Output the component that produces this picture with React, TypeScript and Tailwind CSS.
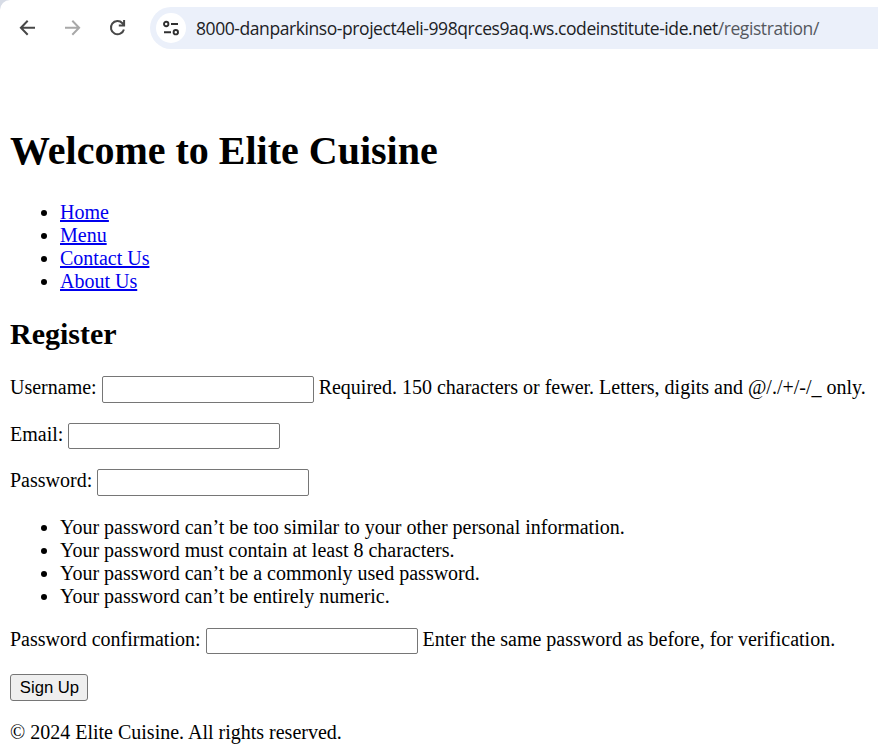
import React from "react";

const links = ["Home", "Menu", "Contact Us", "About Us"];
const rules = [
  "Your password can’t be too similar to your other personal information.",
  "Your password must contain at least 8 characters.",
  "Your password can’t be a commonly used password.",
  "Your password can’t be entirely numeric.",
];

function Toolbar() {
  return (
    <div className="bg-[#d7dce6]">
      <header className="flex h-14 items-center rounded-tl-[10px] bg-white pl-[18px]">
        <svg className="h-5 w-5 shrink-0" viewBox="0 0 20 20" fill="none" stroke="#474747" strokeWidth="2">
          <path d="M17 9.7H3.5M9.7 2.7L2.9 9.7L9.7 16.7" />
        </svg>
        <svg className="ml-6 h-5 w-5 shrink-0" viewBox="0 0 20 20" fill="none" stroke="#a8a8a8" strokeWidth="2">
          <path d="M3 9.7H16.5M10.3 2.7L17.1 9.7L10.3 16.7" />
        </svg>
        <svg className="ml-[26px] h-5 w-5 shrink-0" viewBox="0 0 20 20" fill="none" stroke="#474747" strokeWidth="2">
          <path d="M15.9 11.4A6.6 6.6 0 1 1 14.4 5.2L16 7.2M16.1 2.1V7.6H10.8" />
        </svg>
        <div className="ml-[22px] flex h-[42px] min-w-0 flex-1 items-center rounded-l-full bg-[#ebf0fa] pl-[6px]">
          <div className="flex h-[30px] w-[30px] shrink-0 items-center justify-center rounded-full bg-white">
            <svg className="h-4 w-4" viewBox="0 0 16 16" fill="none" stroke="#303030" strokeWidth="1.9">
              <circle cx="3.2" cy="4" r="2.2" />
              <path d="M8 4H15M1 12.2H8" />
              <circle cx="12.8" cy="12.2" r="2.2" />
            </svg>
          </div>
          <span className="ml-[10px] whitespace-nowrap font-['Open_Sans',sans-serif] text-[17.5px] leading-6 tracking-[-0.425px] text-[#202124]">
            8000-danparkinso-project4eli-998qrces9aq.ws.codeinstitute-ide.net<span className="text-[#55585e]">/registration/</span>
          </span>
        </div>
      </header>
    </div>
  );
}

function Field({ id, label, type, help, box }: { id: string; label: string; type: string; help?: string; box: string }) {
  return (
    <div className={`flex gap-[5px] whitespace-nowrap ${box}`}>
      <label htmlFor={id}>{label}</label>
      <input id={id} type={type} className="w-[212px] shrink-0 self-stretch rounded-[2px] border border-[#767676] bg-white px-1 outline-none" />
      {help && <span>{help}</span>}
    </div>
  );
}

export default function App() {
  return (
    <div className="h-[750px] overflow-hidden bg-white text-black">
      <Toolbar />
      <main className="px-[10px] pt-[72px] font-['Liberation_Serif','Times_New_Roman',serif] text-[20px] leading-[23px]">
        <h1 className="text-[40px] font-bold leading-[46px]">Welcome to Elite Cuisine</h1>
        <ul className="mt-[27px] list-disc pl-[50px]">
          {links.map((l) => (
            <li key={l}>
              <a href="#" className="text-[#0000ee] underline">{l}</a>
            </li>
          ))}
        </ul>
        <h2 className="mt-[24px] text-[30px] font-bold leading-[34px]">Register</h2>
        <form>
          <Field id="username" label="Username:" type="text" box="mt-[25px] h-[27px]" help="Required. 150 characters or fewer. Letters, digits and @/./+/-/_ only." />
          <Field id="email" label="Email:" type="email" box="mt-[20px] h-[26px]" />
          <Field id="password" label="Password:" type="password" box="mt-[20px] h-[27px]" />
          <ul className="mt-[20px] list-disc pl-[50px]">
            {rules.map((r) => (
              <li key={r}>{r}</li>
            ))}
          </ul>
          <Field id="confirm" label="Password confirmation:" type="password" box="mt-[20px] h-[26px]" help="Enter the same password as before, for verification." />
          <button type="button" className="mt-[20px] flex h-[27px] w-[78px] items-center justify-center rounded-[3px] border border-[#767676] bg-[#efefef] pl-px font-['Liberation_Sans',Arial,sans-serif] text-[16.667px] leading-5">
            Sign Up
          </button>
        </form>
        <footer className="mt-[20px]">© 2024 Elite Cuisine. All rights reserved.</footer>
      </main>
    </div>
  );
}
